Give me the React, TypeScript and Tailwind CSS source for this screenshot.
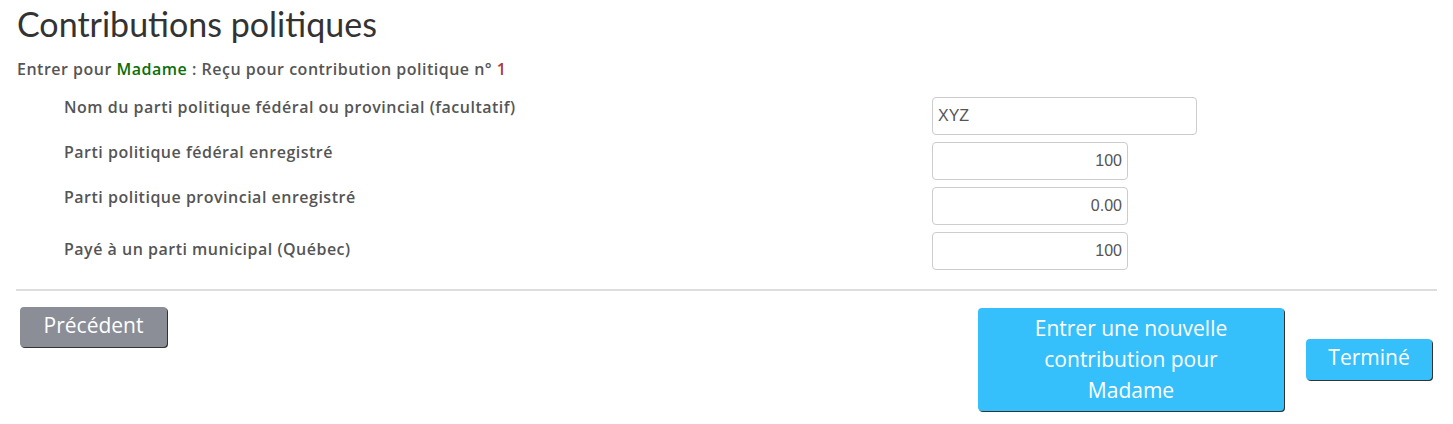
const rows = [
  { label: "Nom du parti politique fédéral ou provincial (facultatif)", value: "XYZ", wide: true },
  { label: "Parti politique fédéral enregistré", value: "100" },
  { label: "Parti politique provincial enregistré", value: "0.00" },
  { label: "Payé à un parti municipal (Québec)", value: "100", extra: true },
];

const App = () => {
  return (
    <div className="bg-white min-h-screen px-4 pt-[4px] font-['Lato',sans-serif]">
      <h1 className="text-[34px] leading-[40px] text-[#333] pl-[1px]">Contributions politiques</h1>
      <p className="mt-[15px] pl-[1px] font-['Open_Sans',sans-serif] text-[16px] font-semibold tracking-[0.5px] text-[#555] leading-5">
        Entrer pour <span className="text-[#0a6e0a]">Madame</span> : Reçu pour contribution politique n°{" "}
        <span className="text-[#a83a3a]">1</span>
      </p>

      <div className="mt-[18px] flex flex-col gap-[7px]">
        {rows.map((r) => (
          <div key={r.label} className="flex items-start">
            <label
              className={`w-[916px] pl-12 font-['Open_Sans',sans-serif] text-[16px] font-semibold tracking-[0.5px] text-[#555] leading-5 ${
                r.extra ? "pt-[7px]" : "pt-0"
              }`}
            >
              {r.label}
            </label>
            <input
              type="text"
              defaultValue={r.value}
              className={`h-[38px] rounded border border-[#ccc] px-[5px] font-['Liberation_Sans',Arial,sans-serif] text-[16px] text-[#555] ${
                r.wide ? "w-[265px] text-left" : "w-[196px] text-right"
              }`}
            />
          </div>
        ))}
      </div>

      <hr className="mt-[19px] border-0 border-t-2 border-[#ddd] w-[1421px]" />

      <div className="mt-[16px] flex items-start justify-between pl-[4px] pr-[5px]">
        <button className="h-[40px] w-[147px] rounded-[4px] bg-[#8b8e96] font-['Open_Sans',sans-serif] text-[21px] text-white shadow-[1px_1px_0_#333] pb-[3px]">
          Précédent
        </button>
        <div className="flex items-center gap-[22px] mt-[1px]">
          <button className="w-[306px] h-[103px] rounded-[4px] bg-[#36c0fb] font-['Open_Sans',sans-serif] text-[21px] leading-[31px] text-white shadow-[1px_1px_0_#333]">
            Entrer une nouvelle
            <br />
            contribution pour
            <br />
            Madame
          </button>
          <button className="w-[126px] h-[41px] rounded-[4px] bg-[#36c0fb] font-['Open_Sans',sans-serif] text-[21px] text-white shadow-[1px_1px_0_#333] pb-[3px]">
            Terminé
          </button>
        </div>
      </div>
    </div>
  );
};

export default App;
